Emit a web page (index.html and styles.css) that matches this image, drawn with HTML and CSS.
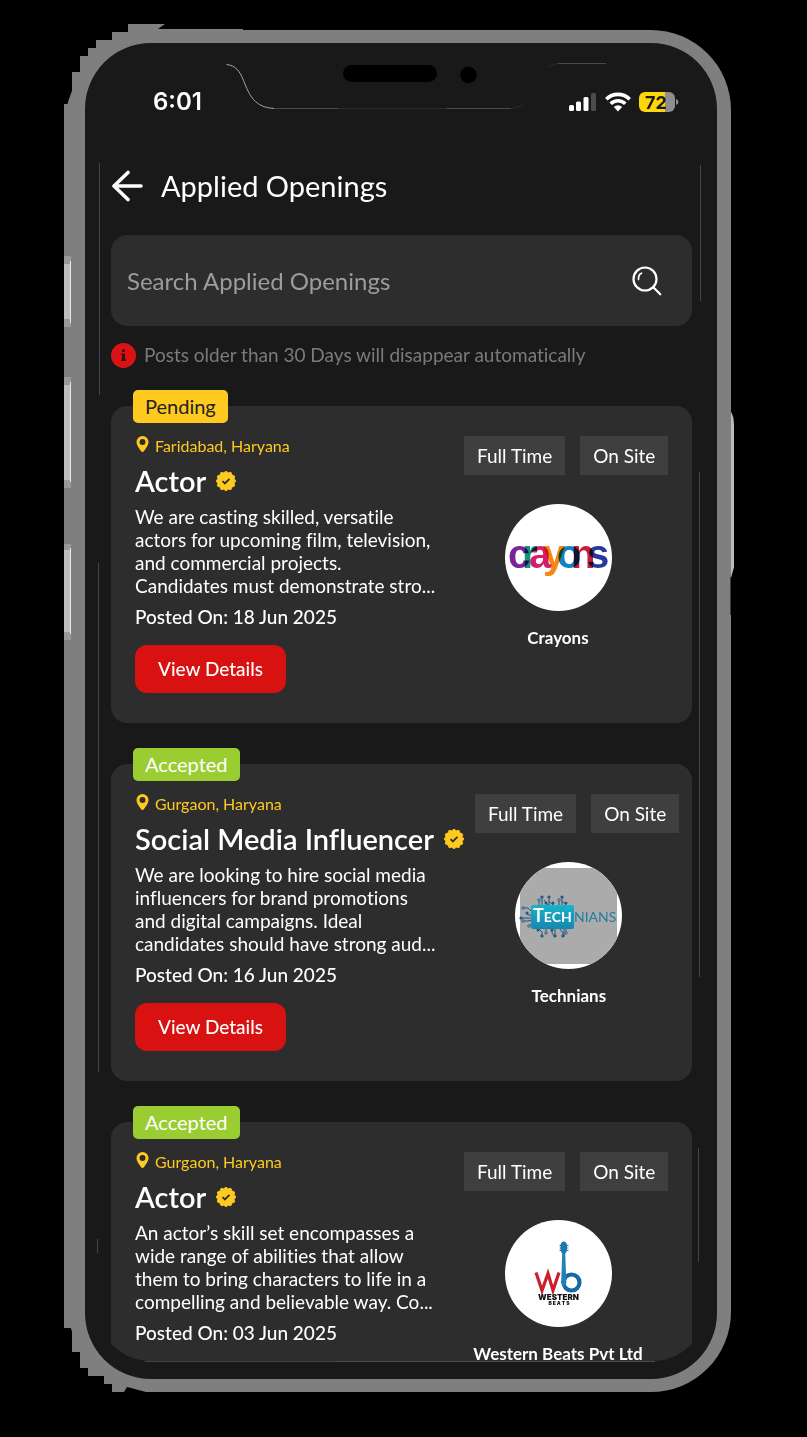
FILE: index.html
```html
<!DOCTYPE html>
<html lang="en">
<head>
<meta charset="utf-8">
<meta name="viewport" content="width=device-width, initial-scale=1">
<title>Applied Openings</title>
<link rel="stylesheet" href="styles.css">
</head>
<body>
<svg class="defs" aria-hidden="true">
  <symbol id="pin" viewBox="0 0 12 16"><path fill-rule="evenodd" d="M6 0a6 6 0 0 0-6 6c0 3.600 3 6.500 4.600 9.200q1.400 1.500 2.800 0C9 12.500 12 9.600 12 6a6 6 0 0 0-6-6zm0 3a3 3 0 1 1 0 6 3 3 0 0 1 0-6z"/></symbol>
  <symbol id="verified" viewBox="0 0 20 20">
    <path fill="#ffca1f" d="M10 0l2.200 1.800L15 1.300l1 2.700 2.700 1-.5 2.800L20 10l-1.800 2.200.5 2.800-2.700 1-1 2.700-2.800-.5L10 20l-2.200-1.800-2.800.5L4 16l-2.700-1 .5-2.800L0 10l1.800-2.200L1.300 5 4 4l1-2.700 2.800.5z" stroke="#ffca1f" stroke-linejoin="round" stroke-width=".8"/>
    <path d="M6.500 10.200l2.400 2.300 4.600-4.600" fill="none" stroke="#2d2d2d" stroke-width="1.800"/>
  </symbol>
</svg>
<main class="phone">
  <svg class="shell" viewBox="64 30 667 1362" preserveAspectRatio="none" aria-hidden="true">
    <path fill="#7f7f7f" d="M64 104h8V72h8V56h8v-8h8v-8h16v-8h16v-8h37l-7 5h85v60L84 200H64zM64 1220h100v172h-18l-19-5-3 5h-12v-8h-8v-8h-16v-8h-8v-16h-8v-24h-8z"/>
    <g fill="#999"><path d="M64 256h7v71h-7zM64 377h7v111h-7zM64 544h7v96h-7z"/></g>
    <g fill="#bdbdbd"><path d="M64 264h6v55h-6zM64 385h6v95h-6zM64 550h6v82h-6z"/></g>
    <g fill="#e8e8e8"><path d="M70 261h1v62h-1zM70 382h1v100h-1zM70 548h1v86h-1z"/></g>
    <path fill="#bcbcbc" d="M731 412q3 4 3 14v141l-3 11z"/>
    <path fill="#3c3c3c" d="M730 577h1v38h-1z"/>
  </svg>
  <div class="screen">
    <header class="status">
      <span class="time">6:01</span>
      <span class="indicators">
        <svg width="28" height="20" viewBox="0 0 28 20" aria-label="Signal"><g fill="#fff"><rect x="0" y="13" width="5" height="6" rx="1.500"/><rect x="7" y="9.500" width="5" height="9.500" rx="1.500"/><rect x="14.500" y="5" width="5" height="14" rx="1.500"/></g><rect x="22" y="1" width="5" height="18" rx="1.500" fill="#4c4c4c"/></svg>
        <svg width="26" height="20" viewBox="0 0 26 20" aria-label="Wi-Fi"><g fill="none" stroke="#fff" stroke-width="3.600"><path d="M1.300 7.200a16.600 16.600 0 0 1 23.400 0"/><path d="M5.700 11.800a10.300 10.300 0 0 1 14.600 0"/></g><path fill="#fff" d="M8.800 15a6 6 0 0 1 8.400 0L13 19.400z"/></svg>
        <svg width="40" height="22" viewBox="0 0 40 22" aria-label="Battery"><clipPath id="cell"><rect x="0" y="1" width="36" height="20" rx="6"/></clipPath><g clip-path="url(#cell)"><path fill="#ffd60a" d="M0 0h26v22H0z"/><path fill="#8e8e8e" d="M26 0h10v22H26z"/></g><path fill="#8e8e8e" d="M37 8q2.500 1 2.500 3T37 14z"/><text x="17" y="17.500" text-anchor="middle" class="charge">72</text></svg>
      </span>
    </header>
    <div class="titlebar">
      <button class="back" type="button" aria-label="Back"><svg width="32" height="32" viewBox="0 0 32 32"><path d="M17 2.500L3 16l14 13.500M3 16h27" fill="none" stroke="#fff" stroke-width="3.600" stroke-linecap="round" stroke-linejoin="round"/></svg></button>
      <h1>Applied Openings</h1>
    </div>
    <form class="search">
      <input type="search" placeholder="Search Applied Openings" aria-label="Search Applied Openings">
      <button type="button" aria-label="Search"><svg width="30" height="30" viewBox="0 0 30 30" fill="none" stroke="#fff" stroke-width="2.200" stroke-linecap="round"><circle cx="13" cy="13" r="11.500"/><path d="M21.300 21.300l7 7"/><path d="M6.500 13.500q-.3-5 3-6.300" stroke-width="1.700"/></svg></button>
    </form>
    <p class="notice"><svg width="25" height="25" viewBox="0 0 25 25" aria-hidden="true"><circle cx="12.500" cy="12.500" r="12.500" fill="#d91313"/><path d="M11 6.500h3v2.600h-3zM10.300 10.500H14v6h1V18h-5v-1.500h1V12h-.7z" fill="#3a1010"/></svg>Posts older than 30 Days will disappear automatically</p>
    <section class="list">
      <article class="card">
        <span class="badge pending">Pending</span>
        <div class="info">
          <p class="place"><svg><use href="#pin"/></svg>Faridabad, Haryana</p>
          <h2>Actor <svg><use href="#verified"/></svg></h2>
          <p class="about">We are casting skilled, versatile<br>actors for upcoming film, television,<br>and commercial projects.<br>Candidates must demonstrate stro...</p>
          <p class="posted">Posted On: 18 Jun 2025</p>
          <button class="details" type="button">View Details</button>
        </div>
        <div class="company">
          <div class="tags"><span>Full Time</span><span>On Site</span></div>
          <svg class="logo" viewBox="0 0 107 107" role="img" aria-label="Crayons logo">
            <circle cx="53.500" cy="53.500" r="53.500" fill="#fff"/>
            <g class="crayons"><text x="3" y="64" fill="#7b2497">c</text><text x="17" y="64" fill="#16917a">r</text><text x="24" y="64" fill="#d41e6c">a</text><text x="38" y="64" fill="#f68712">y</text><text x="52" y="64" fill="#1481c4">o</text><text x="66" y="64" fill="#c8203c">n</text><text x="82" y="64" fill="#25389c">s</text></g>
          </svg>
          <p class="name">Crayons</p>
        </div>
      </article>
      <article class="card">
        <span class="badge accepted">Accepted</span>
        <div class="info">
          <p class="place"><svg><use href="#pin"/></svg>Gurgaon, Haryana</p>
          <h2>Social Media Influencer <svg><use href="#verified"/></svg></h2>
          <p class="about">We are looking to hire social media<br>influencers for brand promotions<br>and digital campaigns. Ideal<br>candidates should have strong aud...</p>
          <p class="posted">Posted On: 16 Jun 2025</p>
          <button class="details" type="button">View Details</button>
        </div>
        <div class="company">
          <div class="tags"><span>Full Time</span><span>On Site</span></div>
          <svg class="logo" viewBox="0 0 107 107" role="img" aria-label="Technians logo">
            <defs><clipPath id="disc"><circle cx="53.500" cy="53.500" r="53.500"/></clipPath><linearGradient id="teal" x2="0" y2="1"><stop stop-color="#18b3cc"/><stop offset="1" stop-color="#1687ad"/></linearGradient></defs>
            <g clip-path="url(#disc)"><path fill="#fff" d="M0 0h107v107H0z"/><path fill="#ababab" d="M5 6h97v96H5z"/></g>
            <g fill="none" stroke="#27577f" stroke-width="1"><path d="M24 43v-4M27 43v-7M33 43l-4-5M34 43v-7M38 43l-4-4M47 43v-7M51 43l-4-4M44 43v-5M24 67l3 3v5M31 67v5M37 67v4l3 4M40 67v7M45 67l3 4v4M51 67v5M17 50l-4-4H9M17 54l-5-2M17 56H6M17 58l-4 1H9M17 62l-3 2M49 67v7"/></g>
            <g fill="#27577f"><circle cx="27" cy="35" r="1.600"/><circle cx="34" cy="35" r="1.600"/><circle cx="47" cy="35" r="1.600"/><circle cx="51" cy="41" r="1.500"/><circle cx="38" cy="41" r="1.500"/><circle cx="31" cy="41" r="1.500"/><circle cx="27" cy="74" r="1.600"/><circle cx="40" cy="74" r="1.600"/><circle cx="48" cy="74" r="1.600"/><circle cx="6" cy="56" r="1.600"/><circle cx="12" cy="51" r="1.500"/><circle cx="23" cy="68" r="1.500"/><circle cx="37" cy="68" r="1.500"/></g>
            <g fill="#ababab" stroke="#27577f" stroke-width=".8"><circle cx="24" cy="38" r="1.300"/><circle cx="44" cy="38" r="1.300"/><circle cx="8" cy="46" r="1.300"/><circle cx="8" cy="59" r="1.300"/><circle cx="14" cy="64" r="1.300"/><circle cx="31" cy="71" r="1.300"/><circle cx="51" cy="71" r="1.300"/></g>
            <rect x="16" y="43" width="43" height="24" rx="2" fill="url(#teal)"/>
            <text x="18" y="60" class="tech"><tspan class="initial">T</tspan>ECH</text><text x="59" y="60" class="nians">NIANS</text>
          </svg>
          <p class="name">Technians</p>
        </div>
      </article>
      <article class="card">
        <span class="badge accepted">Accepted</span>
        <div class="info">
          <p class="place"><svg><use href="#pin"/></svg>Gurgaon, Haryana</p>
          <h2>Actor <svg><use href="#verified"/></svg></h2>
          <p class="about">An actor’s skill set encompasses a<br>wide range of abilities that allow<br>them to bring characters to life in a<br>compelling and believable way. Co...</p>
          <p class="posted">Posted On: 03 Jun 2025</p>
        </div>
        <div class="company">
          <div class="tags"><span>Full Time</span><span>On Site</span></div>
          <svg class="logo" viewBox="0 0 107 107" role="img" aria-label="Western Beats logo">
            <circle cx="53.500" cy="53.500" r="53.500" fill="#fff"/>
            <path d="M31 52.500l6 18 6-17 5 17 6-18" fill="none" stroke="#c9202c" stroke-width="3.200"/>
            <circle cx="66.500" cy="62.500" r="8" fill="none" stroke="#1769a5" stroke-width="4.200"/>
            <path fill="#2183b5" d="M57.200 33h3l1.200 30-2.500 5-2.700-5z"/>
            <path fill="#1f78ab" d="M56.500 22.500q2-2 4.500 0l1 2v6l-1.500 3h-3.500l-1.500-3v-6z"/>
            <path stroke="#1f78ab" stroke-width="1" d="M54.500 25.500h9M54.500 28h9M54.500 30.500h9"/>
            <text x="53.500" y="79.500" text-anchor="middle" class="western">WESTERN</text><text x="54" y="85" text-anchor="middle" class="beats">B E A T S</text>
          </svg>
          <p class="name">Western Beats Pvt Ltd</p>
        </div>
      </article>
    </section>
  </div>
  <svg class="glints" viewBox="64 30 667 1362" preserveAspectRatio="none" fill="none" aria-hidden="true">
    <rect x="343" y="65" width="94" height="17" rx="8.500" fill="#000"/><circle cx="468.500" cy="75" r="8.300" fill="#000"/>
    <path stroke="#a5a5a5" d="M226.500 64.500c9 1 13 6 17 16 6 15 11 27 31 28"/>
    <path stroke="#4a4a4a" d="M274 108.500h64M447 108.500h64M558 63.500h48"/>
    <path stroke="#2b2b2b" d="M338 108.500h109M511 108.500q8-1 12-4M548 67q5-3 10-3.500"/>
    <path stroke="#444" d="M99.500 163v232M98.500 563v509M97.500 1239v14M700.500 165v136M699.500 472v505M698.500 1148v114"/>
    <path stroke="#3c4444" d="M145 1361.500h190"/><path stroke="#4b4b4b" d="M335 1361.500h320"/>
  </svg>
</main>
</body>
</html>
```

FILE: styles.css
```css
* { box-sizing: border-box; }
body { margin: 0; background: #000; color: #fff; font-family: Lato, "Open Sans", sans-serif; font-variant-ligatures: none; }
h1, h2, p { margin: 0; font-weight: 400; }
button { border: 0; padding: 0; background: none; color: inherit; font: inherit; cursor: pointer; }
svg { display: block; flex: none; }
.defs { display: none; }

.phone { position: relative; height: calc(100vh - 75px); margin: 30px 76px 45px 64px; padding: 13px 14px 13px 21px; background: #7f7f7f; border-radius: 100px 80px 80px 100px; }
.shell, .glints { position: absolute; inset: 0; width: 100%; height: 100%; overflow: visible; pointer-events: none; }
.screen { position: relative; display: flex; flex-direction: column; height: 100%; padding: 0 12px 18px 13px; background: #191919; border-radius: 66px; overflow: hidden; }

.status { display: flex; justify-content: space-between; align-items: center; padding: 43px 26px 0 55px; }
.time { font: 600 24px/32px Inter, sans-serif; }
.indicators { display: flex; align-items: center; gap: 8px; }
.charge { font: 700 18px Inter, sans-serif; fill: #191919; }

.titlebar { display: flex; align-items: center; gap: 18px; padding: 48px 13px 0; }
h1 { font-size: 29px; line-height: 40px; }

.search { display: flex; align-items: center; height: 91px; flex: none; margin: 29px 13px 0; padding: 0 30px 0 16px; background: #2d2d2d; border-radius: 16px; }
.search input { flex: 1; min-width: 0; padding: 0; border: 0; outline: 0; background: none; color: #fff; font: 400 24px/32px Lato, sans-serif; }
.search input::placeholder { color: #9c9c9c; opacity: 1; }

.notice { display: flex; align-items: center; gap: 8px; margin: 16px 13px 0; color: #7b7b7b; font-size: 19px; line-height: 26px; white-space: nowrap; }

.list { display: flex; flex-direction: column; flex: 1; gap: 41px; min-height: 0; margin-top: 22px; padding: 16px 13px 0; overflow: hidden; border-radius: 0 0 52px 52px; }
.card { position: relative; display: flex; flex: none; gap: 11px; min-height: 317px; padding: 30px 24px; background: #2d2d2d; border-radius: 16px; }
.badge { position: absolute; top: -16px; left: 22px; padding: 0 12px; border-radius: 5px; font-size: 20px; line-height: 33px; }
.pending { background: #ffca1f; color: #222; }
.accepted { background: #9acd32; }

.info { flex: none; min-width: 318px; white-space: nowrap; }
.place { display: flex; gap: 6px; padding-left: 1px; color: #ffca1f; font-size: 16px; line-height: 20px; }
.place svg { width: 13px; height: 16px; fill: #ffca1f; }
h2 { display: flex; align-items: center; gap: 10px; margin-top: 9px; font-size: 29px; font-weight: 600; line-height: 32px; }
h2 svg { width: 20px; height: 20px; }
.about { margin-top: 8px; font-size: 19px; line-height: 23px; }
.posted { margin-top: 9px; font-size: 19px; font-weight: 500; line-height: 22px; }
.details { margin-top: 17px; padding: 0 23px; background: #d71210; border-radius: 12px; font-size: 19px; font-weight: 500; line-height: 48px; }

.company { display: flex; flex: none; flex-direction: column; width: 188px; }
.tags { display: flex; gap: 15px; white-space: nowrap; }
.tags span { padding: 0 13px; background: #3f3f3f; font-size: 19px; line-height: 39px; }
.logo { align-self: center; width: 107px; height: 107px; margin-top: 29px; }
.name { margin-top: 15px; font-size: 17px; font-weight: 700; line-height: 24px; text-align: center; white-space: nowrap; }

.crayons { font: 700 40px "Liberation Sans", sans-serif; }
.crayons text { mix-blend-mode: multiply; }
.tech { font: 700 14px Lato, sans-serif; fill: #fff; }
.initial { font-size: 18px; }
.nians { font: 400 14px Lato, sans-serif; fill: #237da5; }
.western { font: 900 8px Inter, sans-serif; fill: #111; }
.beats { font: 900 5px Inter, sans-serif; fill: #111; }
```
